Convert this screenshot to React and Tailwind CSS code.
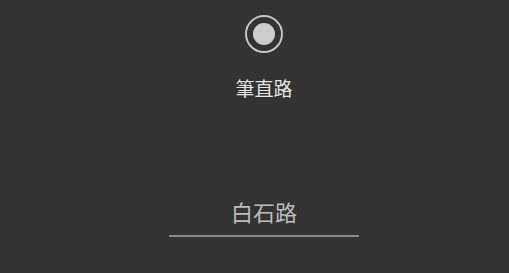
export default function App() {
  const font = { fontFamily: '"Noto Sans CJK TC", "Noto Sans CJK SC", sans-serif' };
  return (
    <div className="w-full h-[273px] bg-[#333333] flex flex-col items-center pt-[15px] pl-[19px]" style={font}>
      <div className="w-[38px] h-[38px] rounded-full border-2 border-[#c4c4c4] flex items-center justify-center">
        <div className="w-[22px] h-[22px] rounded-full bg-[#cdcdcd]" />
      </div>
      <div className="mt-[23px] text-[19px] leading-[24px] text-[#e4e4e4]">筆直路</div>
      <div className="mt-[97px] w-[190px] flex flex-col items-center">
        <div className="text-[22px] leading-[28px] text-[#bcbcbc]">白石路</div>
        <div className="mt-[10px] w-full h-[2px] bg-[#8a8a8a]" />
      </div>
    </div>
  );
}
